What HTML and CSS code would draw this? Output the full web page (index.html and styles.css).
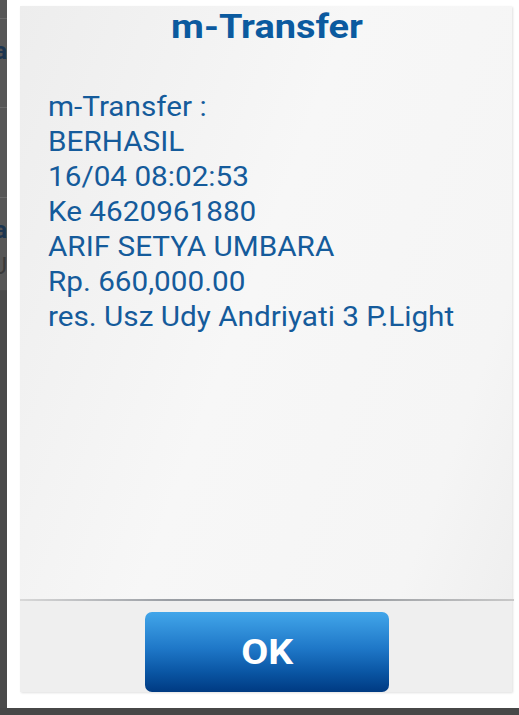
FILE: index.html
```html
<!DOCTYPE html>
<html>
<head>
<meta charset="utf-8">
<link rel="stylesheet" href="styles.css">
</head>
<body>
<div class="screen">
  <div class="behind">
    <div class="b-row b-top"></div>
    <div class="b-row b-a1"><span class="b-txt">Ja</span></div>
    <div class="b-row b-mid"></div>
    <div class="b-row b-a2"><span class="b-txt">Ja</span><span class="b-txt b-sub">U</span></div>
    <div class="b-row b-rest"></div>
  </div>
  <div class="dialog">
    <div class="panel">
      <h1 class="title"><span class="title-text">m-Transfer</span></h1>
      <div class="message">
        <div class="line">m-Transfer :</div>
        <div class="line">BERHASIL</div>
        <div class="line">16/04 08:02:53</div>
        <div class="line">Ke 4620961880</div>
        <div class="line">ARIF SETYA UMBARA</div>
        <div class="line">Rp. 660,000.00</div>
        <div class="line">res. Usz Udy Andriyati 3 P.Light</div>
      </div>
      <div class="sep"></div>
      <div class="actions">
        <button class="ok"><span class="ok-text">OK</span></button>
      </div>
    </div>
  </div>
</div>
</body>
</html>
```
FILE: styles.css
```css
html, body {
  margin: 0;
  padding: 0;
  background: #474747;
  width: 519px;
  height: 715px;
  overflow: hidden;
  font-family: Roboto, "Liberation Sans", sans-serif;
}
.screen {
  display: flex;
  height: 708px;
}
.behind {
  width: 7px;
  flex: none;
  display: flex;
  flex-direction: column;
  background: #575757;
  overflow: hidden;
}
.b-row {
  border-bottom: 1px solid #6a6a6a;
  overflow: hidden;
}
.b-top { height: 18px; }
.b-a1 { height: 88px; }
.b-mid { height: 89px; }
.b-a2 { height: 92px; border-bottom-color: #4c4c4c; }
.b-rest { flex: 1; border: none; background: #4a4a4a; }
.b-txt {
  display: block;
  width: 7px;
  direction: rtl;
  white-space: nowrap;
  font-weight: bold;
  font-size: 24px;
  color: #1c3550;
  line-height: 24px;
  margin-top: 20px;
}
.b-sub {
  margin-top: 12px;
  font-weight: normal;
  color: #3a3a3a;
}
.dialog {
  flex: 1;
  background: #ffffff;
  padding: 6px 7px 16px 13px;
  display: flex;
  overflow: hidden;
}
.panel {
  flex: 1;
  display: flex;
  flex-direction: column;
  background: linear-gradient(110deg, #ededed 0%, #f7f7f7 45%, #f5f5f5 80%, #ededed 100%);
  box-shadow: 1px 1px 2px rgba(0,0,0,0.12);
}
.title {
  margin: 0;
  text-align: center;
  font-size: 34px;
  font-weight: bold;
  color: #0b5a9f;
  line-height: 40px;
  padding-left: 1px;
}
.title-text {
  display: inline-block;
  transform: scaleX(1.115);
}
.message {
  flex: 1;
  padding: 44px 0 0 28px;
  font-size: 27px;
  line-height: 35px;
  color: #155b9b;
}
.line {
  transform: scaleX(1.1);
  transform-origin: left center;
  white-space: nowrap;
}
.sep {
  height: 2px;
  background: linear-gradient(90deg, #d8d8d8 0%, #9a9ea4 30%, #8e9298 60%, #c8c8c8 100%);
  margin-right: -2px;
}
.actions {
  height: 91px;
  display: flex;
  justify-content: center;
  align-items: flex-end;
  background: #efefef;
  padding-left: 2px;
}
.ok {
  width: 244px;
  height: 80px;
  border: none;
  border-radius: 7px;
  background: linear-gradient(180deg, #42a6ea 0%, #1f78c8 45%, #0a56a4 75%, #003a82 100%);
  color: #ffffff;
  font-family: Roboto, "Liberation Sans", sans-serif;
  font-weight: bold;
  font-size: 35px;
  padding: 0;
}
.ok-text {
  display: inline-block;
  transform: scaleX(1.12);
}
```
